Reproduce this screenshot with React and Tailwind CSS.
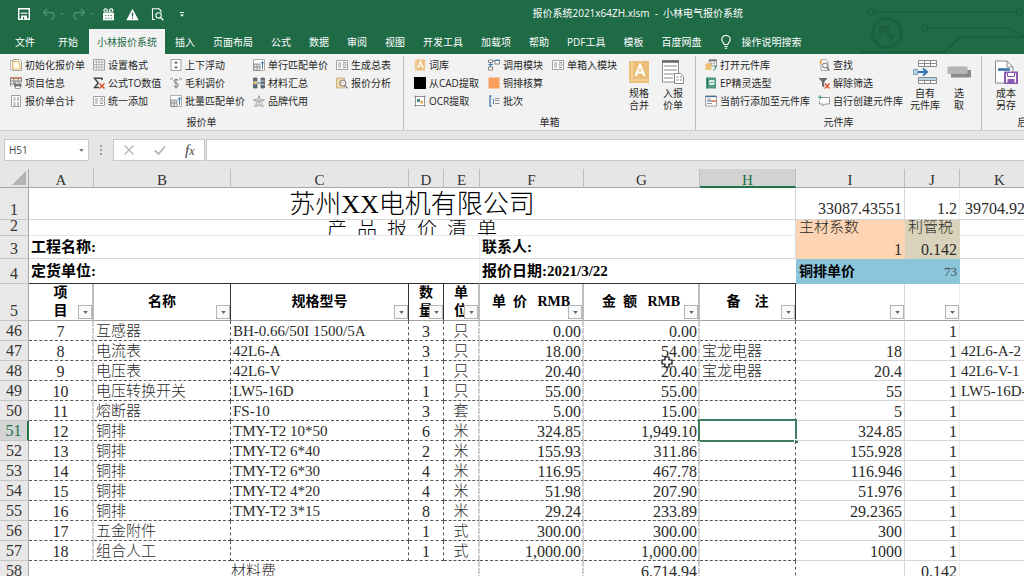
import React from "react";

const ui = "font-['Open_Sans','Noto_Sans_CJK_SC',sans-serif]";
const sheetFont = "font-['Liberation_Serif','Noto_Sans_CJK_SC',serif] font-light";

/* ---------- small ribbon icons, drawn on a 12 x 12 grid ---------- */
const art = {
  page: (
    <>
      <path d="M3 .5h6l2.5 2.5v8.500h-8.500z" fill="#fff" stroke="#8a8a8a" strokeWidth=".8" />
      <path d="M.6 1.500h2v9.500h-2z" fill="#fff" stroke="#9a9a9a" strokeWidth=".7" />
      <path d="M2.800 2.500h5l2 2v5.500h-7z" fill="#fffaf0" stroke="#e8b860" strokeWidth="1.200" />
    </>
  ),
  printTable: (
    <>
      <path d="M.5 1h11M.5 4h11M.5 7h4M.5 1v8M4 1v6M8 1v3M11.500 1v4" stroke="#777" fill="none" strokeWidth=".9" />
      <path d="M.5 1h11" stroke="#d8623c" strokeWidth="1.200" />
      <path d="M4 6.500h7.500v3.500H4z" fill="#777" />
      <path d="M5.500 5h4.500v2H5.500zM5.500 9h4.500v2.500H5.500z" fill="#fff" stroke="#777" strokeWidth=".7" />
    </>
  ),
  calc: (
    <>
      <path d="M1.500 .5h9v11h-9z" fill="#fff" stroke="#8a8a8a" strokeWidth=".8" />
      <path d="M3.500 3h2M7 3h2M3.500 5h2M7 5h2M3.500 8h2M7 8h2M3.500 10h2M7 10h2" stroke="#6e7f92" strokeWidth="1" />
    </>
  ),
  grid: (
    <>
      <path d="M.5 .5h11v10.500h-11z" fill="#fff" stroke="#8a8a8a" strokeWidth=".8" />
      <path d="M.5 3h11M.5 5.600h11M.5 8.200h11M3.300 .5v10.500M6 .5v10.500M8.800 .5v10.500" stroke="#999" strokeWidth=".7" />
    </>
  ),
  sigma: (
    <>
      <path d="M9 3V1.300H1.500L5.200 6 1.500 10.500H6" fill="none" stroke="#444" strokeWidth="1.500" />
      <path d="M6.500 6.500l5 5M11.500 6.500l-5 5" stroke="#e0542c" strokeWidth="1.500" />
    </>
  ),
  form: (
    <>
      <path d="M.5 1.500h11v9h-11z" fill="#fff" stroke="#8a8a8a" strokeWidth=".8" />
      <path d="M2 4h3M2 6h3M2 8h3M7 3.600h3M7 8.500h3" stroke="#888" strokeWidth=".9" />
      <path d="M7 5h3v2H7z" fill="none" stroke="#888" strokeWidth=".6" />
    </>
  ),
  updown: (
    <>
      <path d="M1 .5h10v11H1z" fill="#fff" stroke="#8a8a8a" strokeWidth=".8" />
      <path d="M6 2L4 4.500h4zM6 10L4 7.500h4z" fill="#4d6a86" />
    </>
  ),
  dollar: (
    <>
      <path d="M8.200 3.500C7.500 2 4 2 4 4.200S8.400 6 8.400 8.300 4.400 10.500 3.600 8.600M6 1.500v10" fill="none" stroke="#777" strokeWidth="1" />
      <path d="M.6 .8v2M2.200 .8v2M9.800 .8v2M11.400 .8v2" stroke="#888" strokeWidth=".8" />
    </>
  ),
  match: (
    <>
      <path d="M.5 .5h11v11h-11z" fill="#fff" stroke="#999" strokeWidth=".8" />
      <path d="M1 5h6v6.500H1z" fill="#e2e4e6" stroke="#777" strokeWidth=".7" />
      <path d="M1 8h6M4 5v6.500" stroke="#777" strokeWidth=".7" />
      <path d="M9.500 10V3M8 4.500L9.500 2.500 11 4.500" stroke="#3d79ad" fill="none" />
    </>
  ),
  columns: (
    <>
      <path d="M.5 1h3.500v10H.5zM8 1h3.500v10H8z" fill="#5a6e82" stroke="#555" strokeWidth=".7" />
      <path d="M.5 4.200h3.500v3H.5z" fill="#e9c27a" />
      <path d="M8 4h3.500M8 7.500h3.500" stroke="#ddd" strokeWidth=".8" />
      <path d="M4.600 6h2.800" stroke="#3d79ad" strokeWidth="1.200" />
    </>
  ),
  star: (
    <path d="M6 .8l1.500 3.700 4 .2-3.200 2.400 1.200 4L6 9l-3.500 2.100 1.200-4L.5 4.700l4-.2zM6 .8V9M.5 4.700L8.300 7.100M11.500 4.700L3.700 7.100M.8 11h10.400" fill="none" stroke="#8a8a8a" strokeWidth=".6" />
  ),
  analyse: (
    <>
      <path d="M.5 1h8v10h-8z" fill="#f3d9a8" stroke="#b9a27a" strokeWidth=".7" />
      <circle cx="6.800" cy="6" r="3" fill="#f6f6f6" stroke="#777" strokeWidth="1" />
      <path d="M9 8.300l2.500 3" stroke="#777" strokeWidth="1.300" />
      <path d="M5.500 6.500l1-1.500 1 1" stroke="#e0863c" fill="none" strokeWidth=".8" />
    </>
  ),
  dict: (
    <>
      <path d="M.8 .5H11.200v11H.8z" fill="#ecc183" />
      <path d="M2 .5v11" stroke="#f8e3c0" strokeWidth=".7" />
      <path d="M3.800 9L6.500 2.500 9.200 9M4.800 7h3.400" fill="none" stroke="#fff" strokeWidth="1.200" />
    </>
  ),
  black: <path d="M0 0h12v12H0z" fill="#000" />,
  orange: <path d="M.5 .5h11v11H.5z" fill="#f9a05c" />,
  ocr: (
    <>
      <path d="M1.500 .5v11M10.500 .5v11M.5 1.500h11M.5 10.500h11" fill="none" stroke="#7b7b7b" strokeWidth=".8" />
      <path d="M2 2h8v8H2z" fill="#fff" />
      <path d="M3 4h3v3H3z" fill="#3f9186" />
      <path d="M6.500 5.500h2.500v3H6.500z" fill="#e9a54a" />
    </>
  ),
  blocks: (
    <>
      <path d="M.5 1h4v2.500h-4zM7 1h4.500v4H7zM.5 8h4v3h-4z" fill="#fff" stroke="#666" strokeWidth=".8" />
      <path d="M5 2h1.500M.5 5.500h4.500M2.500 4v4M7 1.500h4.500" stroke="#3d79ad" strokeWidth="1" />
    </>
  ),
  batch: (
    <>
      <path d="M3.500 1h-1.500v10h1.500" fill="none" stroke="#3d79ad" strokeWidth="1.300" />
      <path d="M4.500 4h1v4.500h-1" fill="none" stroke="#3d79ad" strokeWidth=".8" />
      <path d="M7 3.500h4.500M7 5.500h4.500M7 8.500h4.500" stroke="#777" strokeWidth=".8" />
    </>
  ),
  openLib: (
    <>
      <path d="M4 .8h7.500v6H4z" fill="#fff" stroke="#888" strokeWidth=".8" />
      <path d="M4 1.500h7.500" stroke="#666" strokeWidth="1.500" />
      <path d="M6.500 1v6M9 1v6M4 4.200h7.500" stroke="#999" strokeWidth=".6" />
      <path d="M.5 4.500h6v6.500h-6z" fill="#eebf70" />
      <path d="M8 11c2 0 2.800-1 2.800-3.500M9.200 8.500l1.600-1.500 1.100 1.500" fill="none" stroke="#3f9186" strokeWidth="1" />
    </>
  ),
  book: (
    <>
      <path d="M1 .5h10v11H1z" fill="#4f9a84" />
      <path d="M2.500 .5v11" stroke="#2f6f5e" strokeWidth=".8" />
      <path d="M4.300 3h5v5h-5z" fill="#dbeee8" />
      <path d="M5.500 5.500h2.600" stroke="#4f9a84" />
    </>
  ),
  addRow: (
    <>
      <path d="M.5 1h11v10h-11z" fill="#fff" stroke="#8a8a8a" strokeWidth=".8" />
      <path d="M.5 1.500h11" stroke="#456c92" strokeWidth="1.300" />
      <path d="M2 4h4M2 8.500h5" stroke="#777" strokeWidth=".8" />
      <path d="M6 6h5.500" stroke="#e0542c" strokeWidth="1.300" />
      <path d="M2 6h4" stroke="#3d79ad" strokeWidth="1.200" />
    </>
  ),
  search: (
    <>
      <path d="M3 .7h5l2 2v8.600H3z" fill="#fff" stroke="#8a8a8a" strokeWidth=".8" />
      <path d="M3 .3L.8 4h1.800L1.200 7.200 4.800 3H3L4.500 .3z" fill="#f0b04c" />
      <circle cx="7" cy="6.500" r="2.500" fill="#f6f6f6" stroke="#666" strokeWidth=".9" />
      <path d="M8.800 8.300l2.700 3" stroke="#666" strokeWidth="1.200" />
    </>
  ),
  unfilter: (
    <>
      <path d="M.5 1h9L6.200 5v5.500L4 9V5z" fill="#6b6b6b" />
      <path d="M7 6.500l4.500 5M11.500 6.500L7 11.500" stroke="#e0542c" strokeWidth="1.400" />
    </>
  ),
  create: (
    <>
      <path d="M3 2.500h8.500v6.500H7.200L5 11V9H1.500V6" fill="#fff" stroke="#8a8a8a" strokeWidth=".9" />
      <path d="M2.200 .3v4M.2 2.300h4" stroke="#3b9a6c" strokeWidth="1.100" />
    </>
  ),
};

const groups = [
  {
    name: "报价单",
    pad: "pl-[10px]",
    cols: [
      ["w-[83px]", ["page", "初始化报价单"], ["printTable", "项目信息"], ["calc", "报价单合计"]],
      ["w-[77px]", ["grid", "设置格式"], ["sigma", "公式TO数值"], ["form", "统一添加"]],
      ["w-[83px]", ["updown", "上下浮动"], ["dollar", "毛利调价"], ["match", "批量匹配单价"]],
      ["w-[83px]", ["match", "单行匹配单价"], ["columns", "材料汇总"], ["star", "品牌代用"]],
      ["w-[67px]", ["form", "生成总表"], ["analyse", "报价分析"]],
    ],
    big: [],
  },
  {
    name: "单箱",
    pad: "pl-[10px] pr-[5px]",
    cols: [
      ["w-[74px]", ["dict", "词库"], ["black", "从CAD提取"], ["ocr", "OCR提取"]],
      ["w-[64px]", ["blocks", "调用模块"], ["orange", "铜排核算"], ["batch", "批次"]],
      ["w-[70px]", ["form", "单箱入模块"]],
    ],
    big: [["bigA", "规格", "合并"], ["bigList", "入报", "价单"]],
  },
  {
    name: "元件库",
    pad: "pl-[9px] pr-[5px]",
    cols: [
      ["w-[113px]", ["openLib", "打开元件库"], ["book", "EP精灵选型"], ["addRow", "当前行添加至元件库"]],
      ["w-[90px]", ["search", "查找"], ["unfilter", "解除筛选"], ["create", "自行创建元件库"]],
    ],
    big: [["bigOwn", "自有", "元件库"], ["bigPick", "选", "取"]],
  },
  { name: "后台", pad: "pl-[7px] pr-[50px]", cols: [], big: [["bigSave", "成本", "另存"]] },
];

/* ---------- large ribbon icons, 24 x 24 ---------- */
const bigArt = {
  bigA: (
    <>
      <path d="M2 1h20v22H2z" fill="#ecbf78" />
      <path d="M5 1v18M2 20h20" stroke="#f7dfb5" strokeWidth="1" />
      <path d="M8.500 16L13 5l4.500 11M10 12.500h6" fill="none" stroke="#fff" strokeWidth="2" />
    </>
  ),
  bigList: (
    <>
      <path d="M1.500 1h16v21h-16z" fill="#fff" stroke="#8a8a8a" />
      <path d="M1 1.500h17" stroke="#666" strokeWidth="2.500" />
      <path d="M3 6h13M3 10h13M3 14h10M3 18h9" stroke="#888" strokeWidth="1" />
      <path d="M13.500 13.500h6l3 3v7h-9z" fill="#fff" stroke="#8a8a8a" />
      <path d="M15.500 17h2M19 17h2M15.500 20h2M19 20h2" stroke="#6e7f92" />
    </>
  ),
  bigOwn: (
    <>
      <path d="M5.500 .5h18v6h-18zM5.500 3.500h18M11.500 .5v6M17.500 .5v6" fill="#fff" stroke="#8a8a8a" />
      <path d="M5.500 17.500h18v6h-18z" fill="#b9d5e8" stroke="#8a8a8a" />
      <path d="M5.500 20.500h18v3h-18zM11.500 20.500v3M17.500 20.500v3" fill="#fff" stroke="#8a8a8a" />
      <path d="M.5 9.500h4v5h-4z" fill="#b9d5e8" stroke="#7aa3c2" />
      <path d="M5 12h8M10 8.500l4 3.500-4 3.500" fill="none" stroke="#2f74b5" strokeWidth="2" />
    </>
  ),
  bigPick: (
    <>
      <path d="M4 10h20v7.500H4z" fill="#8a8a8a" />
      <path d="M.5 6.500h20V14H.5z" fill="#b5b5b5" />
    </>
  ),
  bigSave: (
    <>
      <path d="M1.500 1H13l6 6v16H1.500z" fill="#fff" stroke="#8a8a8a" />
      <path d="M13 1v6h6" fill="none" stroke="#8a8a8a" />
      <path d="M4 9.500h12" stroke="#2f6fa8" strokeWidth="2.500" />
      <path d="M11 12.500h12v11H11z" fill="#fff" stroke="#8a5bb0" strokeWidth="2" />
      <path d="M13.500 12.500h7v4h-7z" fill="#fff" stroke="#8a5bb0" />
      <path d="M13.500 19h7v4.500h-7z" fill="#8a5bb0" />
    </>
  ),
};

function SmallButton({ icon, label }) {
  return (
    <button type="button" className="flex h-[18px] items-center gap-[3px] whitespace-nowrap">
      <svg viewBox="0 0 12 12" className="size-3 shrink-0" aria-hidden="true">{art[icon]}</svg>
      <span>{label}</span>
    </button>
  );
}

function BigButton({ icon, top, bottom }) {
  return (
    <button type="button" className="flex w-[34px] shrink-0 flex-col items-center whitespace-nowrap pt-1 leading-3">
      <svg viewBox="0 0 24 24" className="mb-[3px] size-6" aria-hidden="true">{bigArt[icon]}</svg>
      <span>{top}</span>
      <span>{bottom}</span>
    </button>
  );
}

function Caret({ className }) {
  return (
    <svg viewBox="0 0 6 4" className={className} aria-hidden="true">
      <path d="M0 0h6L3 4z" fill="currentColor" />
    </svg>
  );
}

function TitleBar() {
  return (
    <div className="flex h-[27px] items-center pt-px">
      <div className="flex w-[52%] items-center pl-[18px] text-white">
        <button type="button" aria-label="保存" className="mr-3">
          <svg viewBox="0 0 12 12" className="size-3">
            <path d="M.7 .7h10.600v10.600H.7z" fill="none" stroke="#fff" strokeWidth="1.400" />
            <path d="M2.500 5.200h7" stroke="#fff" strokeWidth="1.200" />
            <path d="M3 7.500h6v4H3z" fill="#fff" />
            <path d="M5 9h1.200v2.500H5z" fill="#1e6b46" />
          </svg>
        </button>
        <button type="button" aria-label="撤消" className="flex items-center gap-1 text-[#4f8d70]">
          <svg viewBox="0 0 14 12" className="h-3 w-[14px]">
            <path d="M5 1L1.500 4.500 5 8M1.500 4.500H8.500c5 0 4.500 6.500 .5 6.500" fill="none" stroke="currentColor" strokeWidth="1.500" />
          </svg>
          <Caret className="h-[2px] w-1" />
        </button>
        <button type="button" aria-label="恢复" className="ml-2 flex items-center gap-1 text-[#4f8d70]">
          <svg viewBox="0 0 14 12" className="h-3 w-[14px]">
            <path d="M9 1l3.500 3.500L9 8M12.500 4.500H5.500c-5 0-4.500 6.500-.5 6.500" fill="none" stroke="currentColor" strokeWidth="1.500" />
          </svg>
          <Caret className="h-[2px] w-1" />
        </button>
        <button type="button" aria-label="工具" className="ml-2">
          <svg viewBox="0 0 13 13" className="size-[13px]">
            <path d="M1 5h11v7.300H1z" fill="#fff" />
            <path d="M3 10.300h1.500M5.800 10.300h1.500M8.600 10.300h1.500M3 7.500h1.500M5.800 7.500h1.500M8.600 7.500h1.500" stroke="#1e6b46" strokeWidth=".8" />
            <circle cx="3.600" cy="2.600" r="1.700" fill="none" stroke="#fff" strokeWidth="1.100" />
            <circle cx="9.200" cy="2.600" r="1.700" fill="none" stroke="#fff" strokeWidth="1.100" />
            <path d="M5.200 4h2.600" stroke="#fff" />
          </svg>
        </button>
        <button type="button" aria-label="警告" className="ml-[11px]">
          <svg viewBox="0 0 13 13" className="size-[13px]">
            <path d="M6.500 .8L12.700 12.200H.3z" fill="#fff" />
            <path d="M6.500 4.500v4M6.500 9.500v1.300" stroke="#1e6b46" strokeWidth="1.300" />
          </svg>
        </button>
        <button type="button" aria-label="打印预览" className="ml-3">
          <svg viewBox="0 0 13 13" className="size-[13px]">
            <path d="M4 11.500H1.500V.8h6.500l2 2v1.700" fill="none" stroke="#fff" strokeWidth="1.100" />
            <circle cx="7.600" cy="7.400" r="2.700" fill="none" stroke="#fff" strokeWidth="1.100" />
            <path d="M9.500 9.400l2.800 2.900" stroke="#fff" strokeWidth="1.300" />
          </svg>
        </button>
        <button type="button" aria-label="自定义快速访问工具栏" className="ml-4">
          <svg viewBox="0 0 4 5" className="h-[5px] w-1">
            <path d="M0 .5h4" stroke="#fff" strokeWidth="1" />
            <path d="M0 2.500h4L2 4.800z" fill="#fff" />
          </svg>
        </button>
      </div>
      <h1 className="whitespace-pre pb-[3px] text-white">报价系统2021x64ZH.xlsm  -  小林电气报价系统</h1>
    </div>
  );
}

const tabsAfter = ["插入", "页面布局", "公式", "数据", "审阅", "视图", "开发工具", "加载项", "帮助", "PDF工具", "模板", "百度网盘"];

function Tabs() {
  return (
    <nav className="flex h-[27px] items-stretch pl-[6px] pt-[2px] text-white">
      <button type="button" className="mr-[5px] whitespace-nowrap px-[9px]">文件</button>
      <button type="button" className="mr-[2px] whitespace-nowrap px-[9px]">开始</button>
      <button type="button" className="mr-px whitespace-nowrap bg-[#f2f2f2] px-2 text-[#1e6b46]">小林报价系统</button>
      {tabsAfter.map((t) => (
        <button key={t} type="button" className="whitespace-nowrap px-[9px]">{t}</button>
      ))}
      <button type="button" className="flex items-center gap-[10px] whitespace-nowrap pl-[11px]">
        <svg viewBox="0 0 10 14" className="h-[14px] w-[10px]" aria-hidden="true">
          <path d="M3.200 9.500C3.200 8 .8 7 .8 4.600a4.200 4.200 0 0 1 8.400 0C9.200 7 6.800 8 6.800 9.500zM3.300 11.500h3.400M3.800 13.200h2.400" fill="none" stroke="#fff" strokeWidth="1.100" />
        </svg>
        操作说明搜索
      </button>
    </nav>
  );
}

function Header() {
  return (
    <header className="relative shrink-0 overflow-hidden bg-[#1e6b46]">
      <svg viewBox="0 0 164 54" className="absolute right-0 top-0 h-[54px] w-[164px]" fill="none" stroke="#1b6040" aria-hidden="true">
        <circle cx="11" cy="12" r="3" strokeWidth="1.500" />
        <path d="M14 12h142" strokeWidth="2" />
        <circle cx="159" cy="12" r="3" strokeWidth="1.500" />
        <circle cx="27" cy="33" r="14.500" strokeWidth="3" />
        <path d="M33 39L21 27M21 36v-9h9" strokeWidth="3.500" />
        <circle cx="65" cy="28" r="3" strokeWidth="1.500" />
        <path d="M68 28h80l16 8M0 52h84l16-15h64" strokeWidth="2" />
      </svg>
      <div className="relative">
        <TitleBar />
        <Tabs />
      </div>
    </header>
  );
}

function Ribbon() {
  return (
    <div className="flex h-[77px] shrink-0 overflow-hidden border-b border-[#cfcfcf] bg-[#f2f2f2] text-[#262626]">
      {groups.map((g) => (
        <section key={g.name} aria-label={g.name} className="mt-[2px] flex shrink-0 flex-col border-r border-[#bdbdbd]">
          <div className={`flex h-[59px] shrink-0 items-start ${g.pad}`}>
            {g.cols.map(([w, ...items]) => (
              <div key={items[0][1]} className={`flex shrink-0 flex-col items-start ${w}`}>
                {items.map(([icon, label]) => (
                  <SmallButton key={label} icon={icon} label={label} />
                ))}
              </div>
            ))}
            {g.big.map(([icon, top, bottom]) => (
              <BigButton key={icon} icon={icon} top={top} bottom={bottom} />
            ))}
          </div>
          <div className="text-center leading-[15px]">{g.name}</div>
        </section>
      ))}
    </div>
  );
}

function FormulaBar() {
  return (
    <div className="flex h-[38px] shrink-0 items-start bg-[#e6e6e6] pl-1 pt-2 text-[#444]">
      <div className="flex h-[22px] w-[85px] shrink-0 items-center border border-[#c8c8c8] bg-white pr-1">
        <input aria-label="名称框" defaultValue="H51" className="h-full min-w-0 flex-1 bg-transparent pl-1 outline-none" />
        <button type="button" aria-label="名称列表"><Caret className="h-[3px] w-[5px] text-[#777]" /></button>
      </div>
      <div className="flex h-[22px] w-6 shrink-0 flex-col items-center justify-center gap-[2px]">
        <span className="size-[2px] bg-[#a0a0a0]" />
        <span className="size-[2px] bg-[#a0a0a0]" />
        <span className="size-[2px] bg-[#a0a0a0]" />
      </div>
      <div className="flex h-[22px] w-[92px] shrink-0 items-center justify-around border border-[#c8c8c8] bg-white">
        <button type="button" aria-label="取消">
          <svg viewBox="0 0 12 12" className="size-3"><path d="M1.500 1.500l9 9M10.500 1.500l-9 9" stroke="#b5b5b5" strokeWidth="1.300" /></svg>
        </button>
        <button type="button" aria-label="输入">
          <svg viewBox="0 0 12 12" className="size-3"><path d="M1 6.500l3.500 3.500L11 2.500" fill="none" stroke="#b5b5b5" strokeWidth="1.800" /></svg>
        </button>
        <button type="button" aria-label="插入函数" className="font-['Liberation_Serif',serif] text-[15px] italic leading-4">
          f<span className="text-[12px]">x</span>
        </button>
      </div>
      <input aria-label="编辑栏" className="ml-px h-[22px] min-w-0 flex-1 border border-r-0 border-[#c8c8c8] bg-white px-1 outline-none" />
    </div>
  );
}

/* ---------- worksheet ---------- */
const R = {
  light: "border-r border-r-[#d6d6d6]",
  faint: "border-r border-r-[#ececec]",
  dash: "border-r border-r-[#555] border-dashed",
  dashGray: "border-r-2 border-r-[#d0d0d0] border-dashed",
  solid: "border-r border-r-[#333]",
  gray: "border-r-2 border-r-[#bcbcbc]",
};

const widths = ["w-[29px]", "w-[65px]", "w-[137px]", "w-[178px]", "w-[35px]", "w-[36px]", "w-[104px]", "w-[116px]", "w-[96px]", "w-[109px]", "w-[55px]", "w-[80px]"];

const rows = [
  [46, "7", "互感器", "BH-0.66/50I 1500/5A", "3", "只", "0.00", "0.00", "", "", "1", ""],
  [47, "8", "电流表", "42L6-A", "3", "只", "18.00", "54.00", "宝龙电器", "18", "1", "42L6-A-2"],
  [48, "9", "电压表", "42L6-V", "1", "只", "20.40", "20.40", "宝龙电器", "20.4", "1", "42L6-V-1"],
  [49, "10", "电压转换开关", "LW5-16D", "1", "只", "55.00", "55.00", "", "55", "1", "LW5-16D-"],
  [50, "11", "熔断器", "FS-10", "3", "套", "5.00", "15.00", "", "5", "1", ""],
  [51, "12", "铜排", "TMY-T2 10*50", "6", "米", "324.85", "1,949.10", "", "324.85", "1", ""],
  [52, "13", "铜排", "TMY-T2 6*40", "2", "米", "155.93", "311.86", "", "155.928", "1", ""],
  [53, "14", "铜排", "TMY-T2 6*30", "4", "米", "116.95", "467.78", "", "116.946", "1", ""],
  [54, "15", "铜排", "TMY-T2 4*20", "4", "米", "51.98", "207.90", "", "51.976", "1", ""],
  [55, "16", "铜排", "TMY-T2 3*15", "8", "米", "29.24", "233.89", "", "29.2365", "1", ""],
  [56, "17", "五金附件", "", "1", "式", "300.00", "300.00", "", "300", "1", ""],
  [57, "18", "组合人工", "", "1", "式", "1,000.00", "1,000.00", "", "1000", "1", ""],
];

const bodyAlign = [
  "text-center text-[16px]",
  "pl-[2px] text-[15px]",
  "pl-[2px] text-[15px]",
  "text-center text-[16px]",
  "text-center text-[15px]",
  "pr-px text-right text-[16px]",
  "pr-px text-right text-[16px]",
  "pl-[2px] text-[15px]",
  "pr-[2px] text-right text-[16px]",
  "pr-[2px] text-right text-[16px]",
  "pl-[1px] text-[15px]",
];
const bodyRight = ["dashGray", "dash", "dash", "dash", "dashGray", "dashGray", "dashGray", "dash", "light", "faint", "light"];

function RowHead({ n, h, active }) {
  return (
    <th
      scope="row"
      className={`border-b border-b-[#c6c6c6] p-0 align-bottom text-[16px] font-light ${h} ${
        active ? "border-r-2 border-r-[#217346] bg-[#d4d4d4] text-[#217346]" : "border-r border-r-[#a6a6a6] bg-[#e8e8e8] text-[#333]"
      }`}
    >
      <div className="h-[15px] leading-[12px]">{n}</div>
    </th>
  );
}

function FilterButton({ name }) {
  return (
    <button type="button" aria-label={`筛选 ${name}`} className="absolute bottom-px right-0 flex size-[14px] items-center justify-center border border-[#b4b4b4] bg-[#f8f9fb]">
      <Caret className="h-[3px] w-[5px] text-[#666]" />
    </button>
  );
}

function HeadCell({ right, dark, name, children }) {
  return (
    <td className={`relative h-[37px] border-b border-b-[#a0a0a0] p-0 text-center text-[14px] font-bold ${R[right]} ${dark ? "border-t-0 text-black" : ""}`}>
      <div className="whitespace-pre leading-[18px]">{children}</div>
      {name && <FilterButton name={name} />}
    </td>
  );
}

function Sheet() {
  return (
    <main className={`relative min-h-0 flex-1 overflow-hidden bg-white text-[#2a2a2a] ${sheetFont}`}>
      <table className="w-full min-w-[1104px] table-fixed border-separate border-spacing-0">
        <colgroup>
          {widths.map((w, i) => <col key={i} className={w} />)}
          <col />
        </colgroup>
        <thead>
          <tr>
            <th className="relative h-[19px] border-b border-r border-[#a6a6a6] bg-[#e6e6e6] p-0">
              <svg viewBox="0 0 14 14" className="ml-auto mr-[2px] size-[14px]" aria-hidden="true"><path d="M14 0v14H0z" fill="#b4b4b4" /></svg>
            </th>
            {"ABCDEFGHIJK".split("").map((c) => (
              <th
                key={c}
                scope="col"
                className={`h-[19px] border-r border-r-[#bdbdbd] p-0 align-top text-[15px] font-light ${
                  c === "H" ? "border-b-2 border-b-[#217346] bg-[#d2d2d2] text-[#217346]" : "border-b border-b-[#a6a6a6] bg-[#e6e6e6] text-[#333]"
                }`}
              >
                <div className="h-[17px] leading-[22px]">{c}</div>
              </th>
            ))}
            <th className="border-b border-b-[#a6a6a6] bg-[#e6e6e6] p-0" />
          </tr>
        </thead>
        <tbody>
          <tr>
            <RowHead n={1} h="h-[32px]" />
            <td colSpan={8} className={`border-b border-b-[#d6d6d6] p-0 text-center text-[26px] text-black ${R.light}`}>
              <div className="h-[31px] overflow-hidden leading-[33px]">苏州XX电机有限公司</div>
            </td>
            <td className={`border-b border-b-[#d6d6d6] p-0 pr-[2px] text-right align-bottom text-[16px] leading-5 ${R.light}`}>33087.43551</td>
            <td className={`border-b border-b-[#d6d6d6] p-0 pr-[2px] text-right align-bottom text-[16px] leading-5 ${R.faint}`}>1.2</td>
            <td className={`border-b border-b-[#d6d6d6] p-0 pl-[5px] align-bottom text-[16px] leading-5 ${R.light}`}>39704.92</td>
            <td className="border-b border-b-[#d6d6d6] p-0" />
          </tr>
          <tr>
            <RowHead n={2} h="h-[16px]" />
            <td colSpan={8} className={`border-b border-b-[#e8e8e8] p-0 text-center text-[20px] text-black ${R.light}`}>
              <div className="h-[15px] overflow-hidden whitespace-pre leading-[19px]">产  品  报  价  清  单</div>
            </td>
            <td className="bg-[#fdd5b4] p-0 pl-[3px] text-[15px]"><div className="h-4 overflow-hidden leading-[14px]">主材系数</div></td>
            <td className="bg-[#d9d3bb] p-0 pl-[3px] text-[15px]"><div className="h-4 overflow-hidden leading-[14px]">利管税</div></td>
            <td className={`border-b border-b-[#e8e8e8] p-0 ${R.light}`} />
            <td className="border-b border-b-[#e8e8e8] p-0" />
          </tr>
          <tr>
            <RowHead n={3} h="h-[23px]" />
            <td colSpan={5} className={`border-b border-b-[#d6d6d6] p-0 pl-[2px] text-[15px] font-bold text-black ${R.faint}`}>
              <div className="h-[22px] overflow-hidden leading-[22px]">工程名称:</div>
            </td>
            <td colSpan={3} className={`border-b border-b-[#d6d6d6] p-0 pl-[2px] text-[15px] font-bold text-black ${R.light}`}>
              <div className="h-[22px] overflow-hidden leading-[22px]">联系人:</div>
            </td>
            <td className="bg-[#fdd5b4] p-0 pr-[3px] text-right align-bottom text-[16px] leading-[19px]">1</td>
            <td className="bg-[#d9d3bb] p-0 pr-[3px] text-right align-bottom text-[16px] leading-[19px]">0.142</td>
            <td className={`border-b border-b-[#d6d6d6] p-0 ${R.light}`} />
            <td className="border-b border-b-[#d6d6d6] p-0" />
          </tr>
          <tr>
            <RowHead n={4} h="h-[25px]" />
            <td colSpan={5} className={`border-b border-b-[#333] p-0 pl-[2px] text-[15px] font-bold text-black ${R.faint}`}>
              <div className="h-6 overflow-hidden leading-6">定货单位:</div>
            </td>
            <td colSpan={3} className="border-b border-b-[#333] p-0 pl-[2px] text-[15px] font-bold text-black">
              <div className="h-6 overflow-hidden leading-6">报价日期:2021/3/22</div>
            </td>
            <td className="bg-[#8bc5d9] p-0 pl-[3px] text-[14px] font-bold text-black"><div className="leading-6">铜排单价</div></td>
            <td className="bg-[#8bc5d9] p-0 pr-[3px] text-right text-[13px] text-[#3c4d55]"><div className="leading-6">73</div></td>
            <td className={`border-b border-b-[#d6d6d6] p-0 ${R.light}`} />
            <td className="border-b border-b-[#d6d6d6] p-0" />
          </tr>
          <tr>
            <RowHead n={5} h="h-[37px]" />
            <HeadCell right="gray" dark name="项目">{"项\n目"}</HeadCell>
            <HeadCell right="solid" dark name="名称">名称</HeadCell>
            <HeadCell right="solid" dark name="规格型号">规格型号</HeadCell>
            <HeadCell right="solid" dark name="数量">{"数\n量"}</HeadCell>
            <HeadCell right="gray" dark name="单位">{"单\n位"}</HeadCell>
            <HeadCell right="gray" dark name="单价">{"单  价   RMB"}</HeadCell>
            <HeadCell right="gray" dark name="金额">{"金  额   RMB"}</HeadCell>
            <HeadCell right="solid" dark name="备注">{"备    注"}</HeadCell>
            <HeadCell right="light" name="I" />
            <HeadCell right="faint" name="J" />
            <HeadCell right="light" />
            <td className="border-b border-b-[#a0a0a0] p-0" />
          </tr>
          {rows.map(([n, ...cells]) => (
            <tr key={n}>
              <RowHead n={n} h="h-[20px]" active={n === 51} />
              {cells.map((text, i) => (
                <td
                  key={i}
                  className={`relative h-[20px] whitespace-nowrap border-b p-0 ${i < 8 ? "border-b-[#555] [border-bottom-style:dashed]" : "border-b-[#d6d6d6]"} ${R[bodyRight[i]]} ${bodyAlign[i]}`}
                >
                  <div className="h-[19px] overflow-hidden leading-[21px]">{text}</div>
                  {n === 51 && i === 7 && (
                    <span className="absolute -bottom-[2px] -left-[2px] -right-[2px] -top-[2px] border-2 border-[#3f7d5f]">
                      <span className="absolute -bottom-[3px] -right-[3px] size-1 border-l border-t border-white bg-[#217346]" />
                    </span>
                  )}
                </td>
              ))}
              <td className="border-b border-b-[#d6d6d6] p-0" />
            </tr>
          ))}
          <tr>
            <RowHead n={58} h="h-[20px]" />
            <td colSpan={2} className="h-[20px] p-0" />
            <td colSpan={3} className={`p-0 text-[15px] ${R.dashGray}`}><div className="h-[20px] leading-[20px]">材料费</div></td>
            <td className={`p-0 ${R.dashGray}`} />
            <td className={`p-0 pr-px text-right text-[16px] ${R.dashGray}`}><div className="h-[20px] leading-[22px]">6,714.94</div></td>
            <td className={`p-0 ${R.dash}`} />
            <td className={`p-0 ${R.light}`} />
            <td className={`p-0 pr-[2px] text-right text-[16px] ${R.faint}`}><div className="h-[20px] leading-[22px]">0.142</div></td>
            <td className={`p-0 ${R.light}`} />
            <td className="p-0" />
          </tr>
        </tbody>
      </table>
      <svg viewBox="0 0 12 12" className="absolute left-[661px] top-[187px] size-3" aria-hidden="true">
        <path d="M4 1h4v3h3v4H8v3H4V8H1V4h3z" fill="#fff" stroke="#000" strokeWidth="1.200" />
      </svg>
    </main>
  );
}

export default function App() {
  return (
    <div className={`flex h-screen flex-col overflow-hidden bg-[#e6e6e6] text-[10px] leading-[14px] ${ui}`}>
      <Header />
      <Ribbon />
      <FormulaBar />
      <Sheet />
    </div>
  );
}
